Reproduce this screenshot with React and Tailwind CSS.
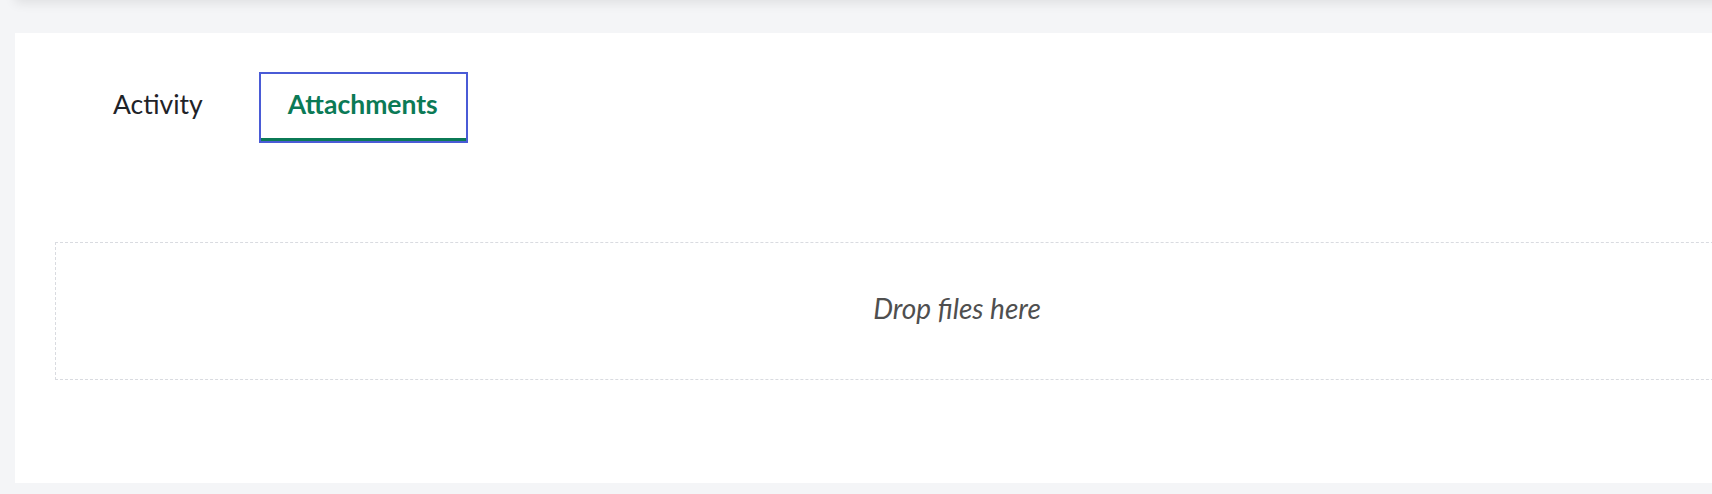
import React, { useState } from 'react';

const tabs = ['Activity', 'Attachments'];

export default function App() {
  const [active, setActive] = useState('Attachments');

  return (
    <div className="w-[1712px] h-[494px] overflow-hidden bg-[#f4f5f7] font-['Lato',sans-serif]">
      {/* bottom edge of the card above */}
      <div className="-mt-5 h-5 ml-[15px] w-[1740px] bg-white shadow-[0_3px_12px_rgba(0,0,0,0.09)]" />

      <div className="mt-[33px] ml-[15px] w-[1884px] h-[450px] bg-white">
        <div className="flex items-center gap-[28px] pt-[41px] pl-[68px]">
          {tabs.map((t) => {
            const on = t === active;
            return (
              <button
                key={t}
                onClick={() => setActive(t)}
                className={
                  on
                    ? 'h-[67px] pl-[27px] pr-[28px] pb-[2px] text-[26.5px] font-bold text-[#0b7a56] border-b-[3px] border-[#0b7a56] outline-2 outline-[#4a5bd6] outline-offset-0'
                    : 'h-[67px] px-[30px] pb-[2px] text-[26.5px] text-[#1f2328] border-b-[3px] border-transparent'
                }
              >
                {t}
              </button>
            );
          })}
        </div>

        {/* drop zone */}
        <div className="mt-[101px] ml-[40px] mr-[40px] h-[138px] pb-[6px] border border-dashed border-[#d9dbe0] flex items-center justify-center">
          <span className="italic text-[28px] text-[#4f4f4f]">Drop files here</span>
        </div>
      </div>
    </div>
  );
}
